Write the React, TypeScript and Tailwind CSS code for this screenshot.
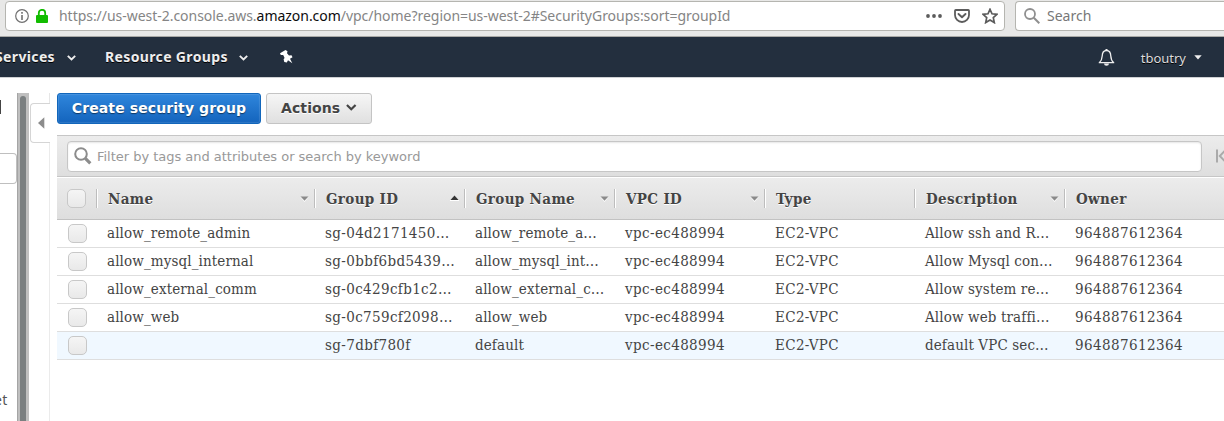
import React from "react";

type Group = {
  name: string;
  id: string;
  groupName: string;
  vpc: string;
  type: string;
  description: string;
  owner: string;
};

const groups: Group[] = [
  { name: "allow_remote_admin", id: "sg-04d2171450…", groupName: "allow_remote_a…", vpc: "vpc-ec488994", type: "EC2-VPC", description: "Allow ssh and R…", owner: "964887612364" },
  { name: "allow_mysql_internal", id: "sg-0bbf6bd5439…", groupName: "allow_mysql_int…", vpc: "vpc-ec488994", type: "EC2-VPC", description: "Allow Mysql con…", owner: "964887612364" },
  { name: "allow_external_comm", id: "sg-0c429cfb1c2…", groupName: "allow_external_c…", vpc: "vpc-ec488994", type: "EC2-VPC", description: "Allow system re…", owner: "964887612364" },
  { name: "allow_web", id: "sg-0c759cf2098…", groupName: "allow_web", vpc: "vpc-ec488994", type: "EC2-VPC", description: "Allow web traffi…", owner: "964887612364" },
  { name: "", id: "sg-7dbf780f", groupName: "default", vpc: "vpc-ec488994", type: "EC2-VPC", description: "default VPC sec…", owner: "964887612364" },
];

const columns: { label: string; sort?: "asc" | "none" }[] = [
  { label: "Name", sort: "none" },
  { label: "Group ID", sort: "asc" },
  { label: "Group Name", sort: "none" },
  { label: "VPC ID", sort: "none" },
  { label: "Type" },
  { label: "Description", sort: "none" },
  { label: "Owner" },
];

const gridCols = "grid grid-cols-[39px_218px_150px_150px_150px_150px_150px_160px]";

function Chevron({ className }: { className: string }) {
  return (
    <svg viewBox="0 0 9 6" className={className}>
      <path d="M.8 .9 4.500 4.500 8.200 .9" fill="none" stroke="currentColor" strokeWidth="1.900" />
    </svg>
  );
}

function Checkbox() {
  return (
    <span className="block size-[19px] rounded-[5px] border border-[#c8c8c8] bg-linear-to-b from-[#f5f5f5] to-[#e9e9e9]" />
  );
}

function SortMark({ dir }: { dir: "asc" | "none" }) {
  return dir === "asc" ? (
    <svg width="9" height="6" viewBox="0 0 9 6" className="mr-[5px] -mt-[3px]">
      <path d="M0 5h9v1H0z" fill="#fff" />
      <path d="M4.5 0.5 8.5 5H.5z" fill="#333" />
    </svg>
  ) : (
    <svg width="9" height="6" viewBox="0 0 9 6" className="mr-[5px] -mt-px">
      <path d="M.5 1h8L4.500 6z" fill="#fff" />
      <path d="M.5 0.500h8L4.500 4.800z" fill="#8a8a8a" />
    </svg>
  );
}

function BrowserBar() {
  return (
    <div className="flex h-[37px] border-b border-[#a9a9a6] bg-[#e8e8e7] pt-px pl-[5px] font-['Noto_Sans',sans-serif] text-[14px]">
      <div className="flex h-[30px] w-[1000px] shrink-0 items-center rounded-[4px] border border-[#b5b5b0] bg-white pl-[9px] pr-[6px]">
        <svg width="14" height="14" viewBox="0 0 14 14" className="shrink-0">
          <circle cx="7" cy="7" r="6.3" fill="none" stroke="#707070" strokeWidth="1.2" />
          <path d="M6.200 3h1.600v1.700H6.200zM6.200 6h1.600v5H6.200z" fill="#707070" />
        </svg>
        <svg width="12" height="14" viewBox="0 0 12 14" className="ml-[7px] shrink-0">
          <path d="M2.800 7V4a3.200 3.200 0 0 1 6.400 0v3" fill="none" stroke="#12bc00" strokeWidth="1.800" />
          <rect y="6" width="12" height="8" rx="1" fill="#12bc00" />
        </svg>
        <span className="-mt-[2px] ml-[11px] grow tracking-[-0.035px] whitespace-nowrap text-[#858585]">
          https://us-west-2.console.aws.<span className="text-[#0c0c0d]">amazon.com</span>/vpc/home?region=us-west-2#SecurityGroups:sort=groupId
        </span>
        <svg width="16" height="4" viewBox="0 0 16 4" fill="#5c5c5c">
          <circle cx="2" cy="2" r="1.900" />
          <circle cx="8" cy="2" r="1.900" />
          <circle cx="14" cy="2" r="1.900" />
        </svg>
        <svg width="16" height="14" viewBox="0 0 16 14" className="ml-[12px]" fill="none" stroke="#5c5c5c">
          <path d="M1.800 1h12.400q.8 0 .8.8V6a7 7 0 0 1-14 0V1.800Q1 1 1.800 1z" strokeWidth="1.800" />
          <path d="M4.500 5 8 8.300 11.500 5" strokeWidth="1.900" strokeLinecap="round" strokeLinejoin="round" />
        </svg>
        <svg width="16" height="16" viewBox="0 0 16 16" className="ml-[12px]">
          <path d="M8 1.300 10 5.800 15 6.300 11.300 9.600 12.300 14.600 8 12 3.700 14.600 4.700 9.600 1 6.300 6 5.800z" fill="none" stroke="#5c5c5c" strokeWidth="1.700" strokeLinejoin="miter" />
        </svg>
      </div>
      <div className="ml-[10px] flex h-[30px] grow items-center rounded-l-[4px] border border-r-0 border-[#b5b5b0] bg-white pl-[8px]">
        <svg width="16" height="16" viewBox="0 0 16 16">
          <circle cx="6" cy="6" r="5" fill="none" stroke="#8f8f8f" strokeWidth="1.800" />
          <path d="M9.800 9.800 15.300 15.300" stroke="#8f8f8f" strokeWidth="2" />
        </svg>
        <span className="-mt-[2px] ml-[7px] text-[#777]">Search</span>
      </div>
    </div>
  );
}

function AwsNav() {
  return (
    <div className="flex h-[40px] items-center overflow-hidden bg-[#232f3e] pr-[22px] font-['Noto_Sans',sans-serif] text-[#eee] [text-shadow:0_1px_0_#000]">
      <span className="-ml-[5px] -mt-[2px] text-[14px] font-bold tracking-[0.360px]">Services</span>
      <Chevron className="mt-[2px] ml-[12px] h-[6px] w-[9px]" />
      <span className="ml-[29px] -mt-[2px] text-[14px] font-bold tracking-[0.360px]">Resource Groups</span>
      <Chevron className="mt-[2px] ml-[11px] h-[6px] w-[9px]" />
      <svg width="13" height="14" viewBox="0 0 13 14" className="ml-[32px]" fill="#fff">
        <path d="M0 3.200 5.500 0 7.500 1.200 7 3.200 9 5.400 11.500 5.200 12.500 7.300 10 8.800 12.300 13.200 8 10.300 6.800 12.600 4.300 12 3.600 9.300 4.600 8 3.200 5 .8 5z" />
      </svg>
      <svg width="17" height="17" viewBox="0 0 17 17" className="ml-auto">
        <path d="M8.500 1.500C5.500 1.500 4.300 4 4.200 7 4.100 10 3.200 12 1.300 13.700h14.400C13.800 12 12.900 10 12.800 7 12.700 4 11.500 1.500 8.500 1.500z" fill="none" stroke="#eee" strokeWidth="1.300" strokeLinejoin="round" />
        <path d="M7.500 0h2v1.500h-2zM6 14.500h5a2.500 2.300 0 0 1-5 0z" fill="#eee" />
      </svg>
      <span className="mt-[4px] ml-[26px] text-[13px] text-[#ddd]">tboutry</span>
      <svg width="8" height="5" viewBox="0 0 8 5" className="ml-[8px]">
        <path d="M.3.300h7.400L4 4.500z" fill="#eee" />
      </svg>
    </div>
  );
}

function Sidebar() {
  return (
    <div className="flex shrink-0 pt-[15px]">
      <div className="flex w-[17px] flex-col overflow-hidden text-[#555]">
        <div className="mt-[7px] h-[14px] w-px bg-[#444]" />
        <div className="mt-[39px] h-[31px] w-[17px] rounded-r-[4px] border border-l-0 border-[#bfbfbf] bg-white" />
        <span className="mt-[208px] ml-[-6px] block font-['Noto_Sans',sans-serif] text-[14px] leading-[16px] tracking-[0.300px]">et</span>
      </div>
      <div className="w-[12px] border-l border-[#a5a5a5] bg-[#bfbfbf] pt-[3px] pl-[2px]">
        <div className="h-full w-[6px] rounded-t-[3px] bg-[#7a7f80]" />
      </div>
      <div className="flex w-[21px] flex-col items-end">
        <div className="h-[10px] w-px bg-[#e6e6e6]" />
        <div className="flex h-[40px] w-[20px] items-center rounded-l-[4px] border border-r-0 border-[#d5d5d5] pl-[7px]">
          <svg width="7" height="12" viewBox="0 0 7 12">
            <path d="M0 6 6.300.3v11.400z" fill="#8c8c8c" />
          </svg>
        </div>
        <div className="w-px grow bg-[#ebebeb]" />
      </div>
    </div>
  );
}

function Row({ group, selected }: { group: Group; selected: boolean }) {
  const cells = [
    { text: group.name, tracking: "tracking-[0.120px]" },
    { text: group.id, tracking: "tracking-[0.360px]" },
    { text: group.groupName, tracking: "tracking-[0.120px]" },
    { text: group.vpc, tracking: "tracking-[0.380px]" },
    { text: group.type, tracking: "tracking-[0.350px]" },
    { text: group.description, tracking: "tracking-[0.120px]" },
    { text: group.owner, tracking: "tracking-[0.420px]" },
  ];
  return (
    <div className={`${gridCols} h-[28px] items-center border-b border-[#dedede] ${selected ? "bg-[#f0f8ff]" : "bg-white"}`}>
      <div className="pl-[11px]">
        <Checkbox />
      </div>
      {cells.map((cell, i) => (
        <div key={i} className={`overflow-hidden pb-[2px] pl-[11px] leading-[20px] whitespace-nowrap ${cell.tracking}`}>
          {cell.text}
        </div>
      ))}
    </div>
  );
}

export default function App() {
  return (
    <div className="flex h-[421px] w-[1224px] flex-col overflow-hidden bg-white">
      <BrowserBar />
      <AwsNav />
      <div className="flex grow border-t border-[#cfd1d4]">
        <Sidebar />
        <main className="ml-[7px] w-[1167px] shrink-0 overflow-hidden pt-[15px]">
          <div className="flex gap-[5px] font-['DejaVu_Sans',sans-serif] text-[14px] font-bold">
            <button className="h-[31px] w-[204px] rounded-[3px] border border-[#1166bb] bg-linear-to-b from-[#2f86dc] to-[#1364bd] tracking-[0.100px] text-white shadow-[inset_0_0_1px_1px_rgba(255,255,255,0.12)] [text-shadow:0_1px_1px_rgba(0,0,0,0.5)]">
              Create security group
            </button>
            <button className="flex h-[31px] w-[106px] items-center rounded-[3px] border border-[#c4c4c4] bg-linear-to-b from-[#f6f6f6] to-[#e0e0e0] pl-[14px] tracking-[0.100px] text-[#444] [text-shadow:0_1px_0_#fff]">
              Actions
              <Chevron className="-mt-[2px] ml-[6px] h-[7px] w-[10.500px]" />
            </button>
          </div>
          <div className="mt-[11px] flex h-[42px] items-center border-y border-[#c6c6c6] bg-linear-to-b from-[#ececec] to-[#dedede] pl-[10px]">
            <div className="flex h-[31px] w-[1135px] shrink-0 items-center rounded-[4px] border border-[#c6c6c6] bg-white pl-[6px] shadow-[inset_0_1px_2px_rgba(0,0,0,0.1)]">
              <svg width="18" height="18" viewBox="0 0 18 18">
                <circle cx="7" cy="7" r="5.800" fill="none" stroke="#8c8c8c" strokeWidth="2" />
                <path d="M11.300 11.300 16.300 16.300" stroke="#8c8c8c" strokeWidth="3.200" />
              </svg>
              <span className="mt-[2px] ml-[5px] font-['DejaVu_Sans',sans-serif] text-[13px] tracking-[-0.020px] text-[#999]">
                Filter by tags and attributes or search by keyword
              </span>
            </div>
            <svg width="14" height="14" viewBox="0 0 14 14" className="ml-[14px] shrink-0" stroke="#aaa" fill="none">
              <path d="M1 .5v13M9.500 1 3.800 7l5.700 6" strokeWidth="2" />
            </svg>
          </div>
          <div className="font-['DejaVu_Serif_Condensed','DejaVu_Serif',serif] text-[15px] text-[#444]">
            <div className={`${gridCols} h-[43px] items-center border-t border-b border-t-white border-b-[#c2c2c2] bg-linear-to-b from-[#ececec] to-[#dedede] font-bold [text-shadow:0_1px_0_#fff]`}>
              <div className="pl-[10px]">
                <Checkbox />
              </div>
              {columns.map((column) => (
                <div key={column.label} className="flex h-[19px] items-center justify-between border-l border-[#bdbdbd] pt-[2px] pl-[11px] tracking-[0.340px] whitespace-nowrap shadow-[inset_1px_0_0_#fff]">
                  {column.label}
                  {column.sort && <SortMark dir={column.sort} />}
                </div>
              ))}
            </div>
            {groups.map((group, i) => (
              <Row key={group.id} group={group} selected={i === groups.length - 1} />
            ))}
          </div>
        </main>
      </div>
    </div>
  );
}
